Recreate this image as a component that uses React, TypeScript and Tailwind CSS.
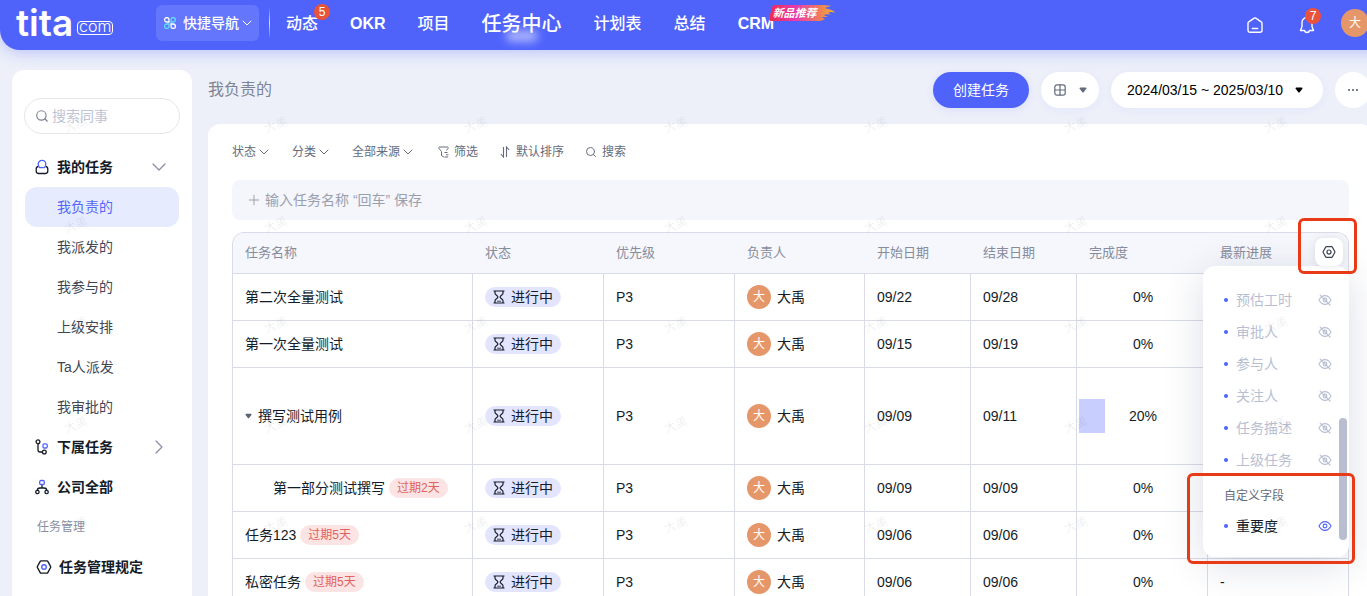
import { ReactNode, useState } from "react"
import { ChevronDown, ChevronRight, Plus, Search } from "lucide-react"

const navItems = [
  { label: "动态", badge: "5" },
  { label: "OKR" },
  { label: "项目" },
  { label: "任务中心", active: true },
  { label: "计划表" },
  { label: "总结" },
  { label: "CRM", isNew: true },
]

const myTasks = ["我负责的", "我派发的", "我参与的", "上级安排", "Ta人派发", "我审批的"]

const columns = [
  { label: "任务名称", width: "w-[240px]" },
  { label: "状态", width: "w-[131px]" },
  { label: "优先级", width: "w-[131px]" },
  { label: "负责人", width: "w-[130px]" },
  { label: "开始日期", width: "w-[106px]" },
  { label: "结束日期", width: "w-[106px]" },
  { label: "完成度", width: "w-[131px]" },
  { label: "最新进展", width: "" },
]

type Task = {
  name: string
  start: string
  end: string
  progress: number
  overdue?: string
  parent?: boolean
  child?: boolean
}

const tasks: Task[] = [
  { name: "第二次全量测试", start: "09/22", end: "09/28", progress: 0 },
  { name: "第一次全量测试", start: "09/15", end: "09/19", progress: 0 },
  { name: "撰写测试用例", start: "09/09", end: "09/11", progress: 20, parent: true },
  { name: "第一部分测试撰写", start: "09/09", end: "09/09", progress: 0, overdue: "过期2天", child: true },
  { name: "任务123", start: "09/06", end: "09/06", progress: 0, overdue: "过期5天" },
  { name: "私密任务", start: "09/06", end: "09/06", progress: 0, overdue: "过期5天" },
]

const hiddenFields = ["预估工时", "审批人", "参与人", "关注人", "任务描述", "上级任务"]

function Caret({ className }: { className?: string }) {
  return (
    <svg viewBox="0 0 8 6" className={className} fill="currentColor">
      <path d="M1.4 0.4h5.2c0.8 0 1.2 0.8 0.7 1.4L4.7 5.2c-0.4 0.5-1 0.5-1.4 0L0.7 1.8C0.2 1.2 0.6 0.4 1.4 0.4z" />
    </svg>
  )
}

function HexIcon({ className, dot = "currentColor" }: { className?: string; dot?: string }) {
  return (
    <svg viewBox="0 0 16 16" className={className} fill="none" stroke="currentColor" strokeWidth="1.4">
      <path d="M5.1 1.9h5.8a1 1 0 0 1 .9.5l2.8 5.1a1 1 0 0 1 0 1l-2.8 5.1a1 1 0 0 1-.9.5H5.1a1 1 0 0 1-.9-.5L1.4 8.5a1 1 0 0 1 0-1l2.8-5.1a1 1 0 0 1 .9-.5z" />
      <circle cx="8" cy="8" r="2.3" stroke={dot} />
    </svg>
  )
}

function EyeIcon({ off, className }: { off?: boolean; className?: string }) {
  return (
    <svg viewBox="0 0 14 14" className={className} fill="none" stroke="currentColor" strokeWidth="1.1" strokeLinecap="round">
      <path d="M1 7c1.5-2.9 3.6-4.400 6-4.400S11.500 4.100 13 7c-1.500 2.900-3.600 4.400-6 4.400S2.500 9.900 1 7z" />
      <circle cx="7" cy="7" r="1.9" />
      {off && <path d="M2.200 2.200l9.800 9.800" />}
    </svg>
  )
}

function Hourglass() {
  return (
    <svg viewBox="0 0 12 14" className="w-3 h-3.5" fill="none" stroke="currentColor" strokeWidth="1.2">
      <path d="M0.500 1h11M0.500 13h11" />
      <path d="M2 1v2.300c0 1.600 2.900 2.300 2.900 3.700S2 9.100 2 10.700V13M10 1v2.300c0 1.600-2.900 2.300-2.900 3.700s2.900 2.100 2.900 3.700V13" />
      <path d="M4 11.200h4" strokeWidth="0.800" />
    </svg>
  )
}

function Logo() {
  return (
    <a href="#" className="flex items-end w-[140px] h-9 text-white">
      <span className="font-[Inter] font-semibold text-[37px] leading-9">tita</span>
      <span className="flex items-center justify-center w-9 h-3.5 mb-1.5 ml-1 border border-white rounded-sm font-[Inter] font-light text-base leading-3 pb-1">
        com
      </span>
    </a>
  )
}

function NewTag() {
  return (
    <span className="absolute -top-[7px] left-[31px] w-[66px] h-4">
      <svg viewBox="0 0 66 16" className="absolute inset-0 w-full h-full">
        <defs>
          <linearGradient id="flame" x1="0" x2="1" y1="0" y2="0">
            <stop offset="0" stopColor="#f02a4b" />
            <stop offset="0.400" stopColor="#e83ab0" />
            <stop offset="0.750" stopColor="#ee7a5c" />
            <stop offset="1" stopColor="#f5b32c" />
          </linearGradient>
        </defs>
        <path
          fill="url(#flame)"
          d="M6 0h47c4 0 5 1 9 .5-2 1.500-5 1.500-6 2.500 3 1.500 7 1 10 4.500-3-1-5-.5-7 0l3 2c-3-.5-5-.5-7 .5 1 1.200 3 1.200 4 1.500-3 1-4 0-6 1 1 1 2 1 3 1.500-2 1.500-4 2-8 2H2c-1.500 0-2.200-1-1.800-2.500L3 2.500C3.500 1 4.500 0 6 0z"
        />
      </svg>
      <span className="absolute left-1 top-0 text-[11px] leading-4 italic font-bold text-white whitespace-nowrap">新品推荐</span>
    </span>
  )
}

function Header() {
  return (
    <header className="relative z-10 flex items-center h-[50px] pb-1 pl-4 pr-4 shrink-0 bg-[#4f63fb] rounded-bl-[20px] shadow-[0_2px_16px_rgba(79,99,251,0.35)] text-white">
      <Logo />
      <button className="flex items-center h-9 pl-2 pr-1 rounded-md bg-white/12 text-sm font-medium">
        <svg viewBox="0 0 12 12" className="w-3 h-3 mr-[7px]" fill="none" strokeWidth="1.3">
          <path d="M5 5H2.800a2.200 2.200 0 1 1 2.200-2.200z" stroke="#fff" />
          <path d="M7 5h2.200A2.200 2.200 0 1 0 7 2.800z" stroke="#5ce0f5" />
          <path d="M5 7H2.800A2.200 2.200 0 1 0 5 9.200z" stroke="#5ce0f5" />
          <path d="M7 7h2.200A2.200 2.200 0 1 1 7 9.200z" stroke="#fff" />
        </svg>
        快捷导航
        <ChevronDown className="w-4 h-4" strokeWidth={1.5} />
      </button>
      <div className="w-px h-8 ml-2.5 mr-4 bg-linear-to-b from-transparent via-white/80 to-transparent" />
      <nav className="flex items-center gap-8 pt-0.5 text-base font-medium">
        {navItems.map((item) => (
          <a key={item.label} href="#" className="relative whitespace-nowrap">
            {item.active ? (
              <>
                <span className="absolute -bottom-1 left-6 w-8 h-3 rounded-full bg-white/50 blur-[4px]" />
                <span className="relative text-xl">{item.label}</span>
              </>
            ) : (
              <span className={/^[A-Z]/.test(item.label) ? "font-bold" : ""}>{item.label}</span>
            )}
            {item.badge && (
              <span className="absolute -top-2 -right-3 w-4 h-4 rounded-full bg-[#ea533b] text-xs leading-4 text-center font-normal">
                {item.badge}
              </span>
            )}
            {item.isNew && <NewTag />}
          </a>
        ))}
      </nav>
      <div className="flex items-center ml-auto">
        <button aria-label="首页" className="pt-1 mr-9">
          <svg viewBox="0 0 16 16" className="w-4 h-4" fill="none" stroke="currentColor" strokeWidth="1.400" strokeLinecap="round" strokeLinejoin="round">
            <path d="M1 6.200c0-.6.300-1 .8-1.300L7.200 1.200c.5-.3 1.100-.3 1.600 0l5.400 3.700c.5.300.8.700.8 1.300v7c0 1.200-.8 2-2 2H3c-1.200 0-2-.8-2-2z" />
            <path d="M5.300 11.500h5.400" />
          </svg>
        </button>
        <button aria-label="通知" className="relative pt-1 mr-[26px]">
          <svg viewBox="0 0 16 18" className="w-4 h-[18px]" fill="none" stroke="currentColor" strokeWidth="1.400" strokeLinecap="round" strokeLinejoin="round">
            <path d="M8 1.500c-3 0-5 2.200-5 5v4L1.500 14.500H5.500c.3 1.300 1.200 2 2.500 2s2.200-.7 2.500-2h4L13 10.500v-4c0-2.800-2-5-5-5z" />
          </svg>
          <span className="absolute -top-1 left-1.5 w-4 h-4 rounded-full bg-[#ea533b] text-xs leading-4 text-center">7</span>
        </button>
        <button className="w-7 h-7 rounded-full bg-[#e6976a] text-xs">大</button>
      </div>
    </header>
  )
}

function SideGroup({ icon, label, arrow }: { icon: ReactNode; label: string; arrow?: ReactNode }) {
  return (
    <a href="#" className="flex items-center h-10 pl-2.5 pr-2 text-sm font-bold text-[#141c28]">
      <span className="w-[22px]">{icon}</span>
      {label}
      <span className="ml-auto text-[#8a90a3]">{arrow}</span>
    </a>
  )
}

function Sidebar() {
  const [current, setCurrent] = useState("我负责的")

  return (
    <aside className="w-[180px] shrink-0 bg-white rounded-t-xl px-3 pt-7 overflow-hidden">
      <label className="flex items-center h-9 px-2.5 border border-[#e5e7ec] rounded-full">
        <Search className="w-3.5 h-3.5 mr-[3px] shrink-0 text-[#7b8191]" strokeWidth={2} />
        <input
          aria-label="搜索同事"
          placeholder="搜索同事"
          className="w-full min-w-0 text-sm outline-none placeholder:text-[#bfc4d5]"
        />
      </label>
      <div className="mt-[13px] px-px">
        <SideGroup
          label="我的任务"
          icon={
            <svg viewBox="0 0 14 16" className="w-3.5 h-4" fill="none" strokeWidth="1.300">
              <path d="M3.500 7.500C2 7.700 1.200 8.600 1.200 10v2c0 1.600.9 2.500 2.500 2.500h6.600c1.600 0 2.500-.9 2.500-2.500v-2c0-1.400-.8-2.300-2.300-2.500" stroke="#141c28" />
              <path d="M4.800 8.700C3.700 7.700 3.200 6.500 3.200 5.200c0-2.200 1.600-3.900 3.800-3.900s3.800 1.700 3.800 3.900c0 1.300-.5 2.500-1.600 3.500z" stroke="#4f63fb" />
            </svg>
          }
          arrow={<ChevronDown className="w-6 h-6" strokeWidth={1.3} />}
        />
        {myTasks.map((item) => (
          <a
            key={item}
            href="#"
            onClick={() => setCurrent(item)}
            className={
              item === current
                ? "flex items-center h-10 pl-8 rounded-xl text-sm bg-[#e6ecfe] text-[#5567fb]"
                : "flex items-center h-10 pl-8 rounded-xl text-sm text-[#3f4755]"
            }
          >
            {item}
          </a>
        ))}
        <SideGroup
          label="下属任务"
          icon={
            <svg viewBox="0 0 14 16" className="w-3.5 h-4" fill="none" stroke="#141c28" strokeWidth="1.300">
              <circle cx="3" cy="2.800" r="1.900" />
              <path d="M3 4.800v6c0 1.300.8 2.200 2 2.200h2.200" />
              <circle cx="9.300" cy="13" r="1.900" />
              <rect x="8" y="4.800" width="4.200" height="4.200" rx="1.200" stroke="#4f63fb" />
            </svg>
          }
          arrow={<ChevronRight className="w-6 h-6" strokeWidth={1.3} />}
        />
        <SideGroup
          label="公司全部"
          icon={
            <svg viewBox="0 0 14 16" className="w-3.5 h-4" fill="none" stroke="#141c28" strokeWidth="1.300">
              <path d="M7 6v3M2.300 11.500C2.300 9.800 3.300 9 4.800 9h4.400c1.500 0 2.500.8 2.500 2.500" />
              <circle cx="2.400" cy="13" r="1.700" />
              <circle cx="11.600" cy="13" r="1.700" />
              <rect x="4.700" y="1.500" width="4.600" height="4" rx="1.200" stroke="#4f63fb" />
            </svg>
          }
        />
        <div className="flex items-center h-10 pl-3 text-xs text-[#8a90a3]">任务管理</div>
        <a href="#" className="flex items-center h-10 pl-[11px] text-sm font-bold text-[#141c28]">
          <HexIcon className="w-4 h-4 mr-[7px]" dot="#4f63fb" />
          任务管理规定
        </a>
      </div>
    </aside>
  )
}

function Toolbar() {
  return (
    <div className="flex items-center h-9 gap-3 pr-0.5">
      <h1 className="mr-auto text-base text-[#7f8596]">我负责的</h1>
      <button className="h-9 px-5 text-sm text-white rounded-full bg-[#4f63fb] shadow-[0_2px_8px_rgba(79,99,251,0.12)]">创建任务</button>
      <button aria-label="视图" className="flex items-center justify-between h-9 w-[58px] px-3 bg-white rounded-full text-[#646b7c] shadow-[0_2px_8px_rgba(79,99,251,0.06)]">
        <svg viewBox="0 0 14 14" className="w-3.5 h-3.5" fill="none" stroke="currentColor" strokeWidth="1.200">
          <rect x="1.800" y="1.800" width="10.400" height="10.400" rx="2.200" />
          <path d="M7 1.800v10.400M1.800 7h10.400" />
        </svg>
        <Caret className="w-2 h-1.5" />
      </button>
      <button className="flex items-center justify-between h-9 w-[212px] pl-4 pr-5 text-sm text-black bg-white rounded-full shadow-[0_2px_8px_rgba(79,99,251,0.06)]">
        2024/03/15 ~ 2025/03/10
        <Caret className="w-2 h-1.5" />
      </button>
      <button aria-label="更多" className="flex items-center justify-center w-9 h-9 gap-0.5 bg-white rounded-full text-[#7b8191]">
        <span className="w-0.5 h-0.5 bg-current" />
        <span className="w-0.5 h-0.5 bg-current" />
        <span className="w-0.5 h-0.5 bg-current" />
      </button>
    </div>
  )
}

function Filters() {
  return (
    <div className="flex items-center h-4 text-xs text-[#646b7c]">
      {["状态", "分类", "全部来源"].map((label) => (
        <button key={label} className="flex items-center mr-5">
          {label}
          <ChevronDown className="w-4 h-4" strokeWidth={1.5} />
        </button>
      ))}
      <button className="flex items-center ml-0.5 mr-[22px]">
        <svg viewBox="0 0 12 12" className="w-3 h-3 mr-1" fill="none" stroke="currentColor" strokeWidth="1">
          <path d="M8.500 4.500L10 2.500c.5-.7.200-1.500-.6-1.500H1.600C.8 1 .5 1.800 1 2.500L3.500 5.500V9.500L6 11.200M6.500 6.500h3M8 8.800h2.500M6.500 11h3.500" />
        </svg>
        筛选
      </button>
      <button className="flex items-center mr-[21px]">
        <svg viewBox="0 0 10 12" className="w-2.5 h-3 mr-1.5" fill="none" stroke="currentColor" strokeWidth="1.100">
          <path d="M3.500 1v10L.8 8M6.500 11V1l2.700 3" />
        </svg>
        默认排序
      </button>
      <button className="flex items-center">
        <Search className="w-3 h-3 mr-[5px]" strokeWidth={2} />
        搜索
      </button>
    </div>
  )
}

function TaskRow({ task }: { task: Task }) {
  const cell = "border-l border-t border-[#d9dce8] pl-3"
  return (
    <tr className={task.parent ? "h-[97px]" : "h-[47px]"}>
      <td className={cell}>
        <div className={task.child ? "flex items-center pl-7" : "flex items-center"}>
          {task.parent && (
            <button aria-label="收起" className="mr-1.5 text-[#5c6373]">
              <Caret className="w-[7px] h-1.5" />
            </button>
          )}
          {task.name}
          {task.overdue && (
            <span className="h-5 px-2 ml-1 text-xs leading-5 rounded-full bg-[#fbe4e3] text-[#e1625c]">{task.overdue}</span>
          )}
        </div>
      </td>
      <td className={cell}>
        <div className="flex items-center w-fit h-5 gap-1.5 px-2 rounded-full bg-[#e3e5ff]">
          <Hourglass />
          进行中
        </div>
      </td>
      <td className={cell}>P3</td>
      <td className={cell}>
        <div className="flex items-center gap-1.5">
          <span className="w-6 h-6 rounded-full bg-[#e6976a] text-white text-xs leading-6 text-center">大</span>
          大禹
        </div>
      </td>
      <td className={cell}>{task.start}</td>
      <td className={cell}>{task.end}</td>
      <td className="border-l border-t border-[#d9dce8] pl-0.5">
        <div className="relative flex items-center justify-center h-[34px]">
          <span className="absolute inset-y-0 left-0 bg-[#c8cefd]" style={{ width: task.progress + "%" }} />
          <span className="relative">{task.progress}%</span>
        </div>
      </td>
      <td className={cell}>-</td>
    </tr>
  )
}

function FieldMenu() {
  return (
    <div className="absolute top-[34px] right-0 w-[146px] h-[291px] pt-[18px] bg-white rounded-xl shadow-[0_8px_40px_rgba(40,50,100,0.16)]">
      <ul>
        {hiddenFields.map((field) => (
          <li key={field} className="flex items-center h-8 pl-[21px] text-sm text-[#b9bfd2]">
            <span className="w-1 h-1 mr-2 rounded-full bg-[#4f63fb]" />
            {field}
            <button aria-label={"显示" + field} className="ml-auto mr-[17px]">
              <EyeIcon off className="w-3.5 h-3.5" />
            </button>
          </li>
        ))}
      </ul>
      <div className="mt-2.5 pl-[21px] text-xs leading-5 text-[#646b7c]">自定义字段</div>
      <div className="flex items-center h-8 mt-1 pl-[21px] text-sm text-[#141c28]">
        <span className="w-1 h-1 mr-2 rounded-full bg-[#4f63fb]" />
        重要度
        <button aria-label="隐藏重要度" className="ml-auto mr-[17px] text-[#4f63fb]">
          <EyeIcon className="w-3.5 h-3.5" />
        </button>
      </div>
      <div className="absolute right-0.5 top-[152px] w-2 h-[122px] rounded-full bg-[#b8bdcf]" />
      {/* annotation around the custom fields */}
      <div className="absolute top-[207px] -left-4 -right-1.5 h-[91px] border-3 border-[#e83a17] rounded-md pointer-events-none" />
    </div>
  )
}

function TaskTable() {
  return (
    <div className="relative mt-3">
      <div className="overflow-hidden border-t border-r border-[#d9dce8] rounded-t-xl">
        <table className="w-full table-fixed border-separate border-spacing-0 text-sm text-[#141c28]">
          <thead>
            <tr className="h-10 bg-[#f6f7fc] text-[13px] text-[#868c9c]">
              {columns.map((col, i) => (
                <th
                  key={col.label}
                  className={
                    i === 0
                      ? col.width + " pl-3 text-left font-normal border-l border-[#d9dce8] rounded-tl-xl"
                      : col.width + " pl-[13px] text-left font-normal"
                  }
                >
                  {col.label}
                </th>
              ))}
            </tr>
          </thead>
          <tbody>
            {tasks.map((task) => (
              <TaskRow key={task.name} task={task} />
            ))}
          </tbody>
        </table>
      </div>
      <FieldMenu />
      <button aria-label="字段设置" className="absolute flex items-center justify-center top-1.5 right-1.5 w-7 h-7 bg-white rounded-lg shadow-[0_0_8px_rgba(40,50,100,0.12)] text-[#3f4755]">
        <HexIcon className="w-3.5 h-3.5" />
      </button>
      {/* annotation around the settings button */}
      <div className="absolute -top-3.5 -right-2 w-[59px] h-14 border-3 border-[#e83a17] rounded-md pointer-events-none" />
    </div>
  )
}

function Watermark() {
  return (
    <div className="absolute inset-x-0 top-[75px] grid grid-cols-[repeat(7,200px)] auto-rows-[100px] pointer-events-none">
      {Array.from({ length: 35 }, (_, i) => (
        <span key={i} className="pt-10 pl-16 text-xs leading-5 text-black/8">
          <span className="inline-block -rotate-20">大禹</span>
        </span>
      ))}
    </div>
  )
}

export default function App() {
  return (
    <div className="h-screen overflow-hidden bg-[#edf0f9] font-['Liberation_Sans','Noto_Sans_CJK_SC',sans-serif]">
      <div className="relative flex flex-col h-full min-w-[1385px]">
        <Header />
        <div className="flex flex-1 min-h-0 gap-4 px-3 pt-5">
          <Sidebar />
          <main className="flex-1 min-w-0 pt-0.5">
            <Toolbar />
            <section className="h-full px-6 pt-5 mt-4 bg-white rounded-t-xl">
              <Filters />
              <label className="flex items-center h-10 pl-3.5 pr-4 mt-5 rounded-lg bg-[#f5f6fb] text-[#9a9fae]">
                <Plus className="w-4 h-4 mr-[3px] shrink-0" strokeWidth={1.5} />
                <input
                  aria-label="新建任务"
                  placeholder="输入任务名称 “回车” 保存"
                  className="w-full text-sm bg-transparent outline-none placeholder:text-[#9a9fae]"
                />
              </label>
              <TaskTable />
            </section>
          </main>
        </div>
        <Watermark />
      </div>
    </div>
  )
}
